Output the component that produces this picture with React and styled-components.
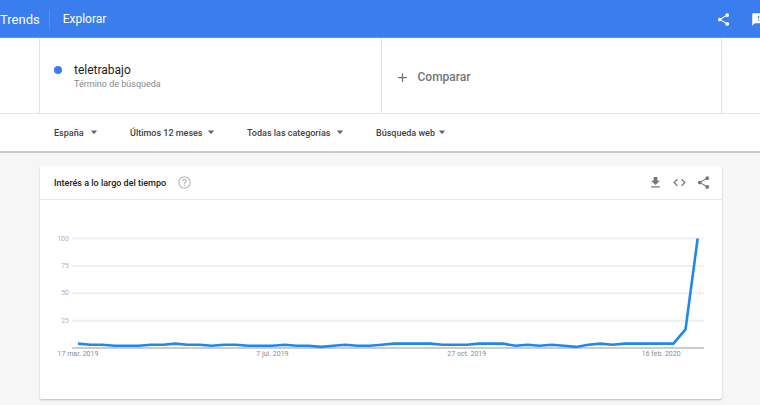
import React from 'react';
import styled, { createGlobalStyle } from 'styled-components';
import { MdShare, MdFeedback, MdFileDownload, MdCode, MdHelpOutline, MdAdd } from 'react-icons/md';

const filters = [
    { id: 'geo', label: 'Ubicación', width: 36, options: ['España', 'Chile'] },
    { id: 'time', label: 'Periodo', width: 77, options: ['Últimos 12 meses', 'Último día'] },
    { id: 'category', label: 'Categoría', width: 89, options: ['Todas las categorías', 'Empleo'] },
    { id: 'source', label: 'Tipo de búsqueda', width: 62, options: ['Búsqueda web', 'Noticias'] },
]

// weekly interest, 0 - 100
const interest = [
    4, 3, 3, 2, 2, 2, 3, 3, 4, 3, 3, 2, 3, 3, 2, 2, 2, 3, 2, 2, 1, 2, 3, 2, 2, 3,
    4, 4, 4, 4, 3, 3, 3, 4, 4, 4, 2, 3, 2, 3, 2, 1, 3, 4, 3, 4, 4, 4, 4, 4, 17, 100,
]

const weeks = [
    { index: 0, text: '17 mar. 2019' },
    { index: 16, text: '7 jul. 2019' },
    { index: 32, text: '27 oct. 2019' },
    { index: 48, text: '16 feb. 2020' },
]

const px = (i) => 38 + i * 12.15
const py = (v) => 148 - v * 1.095

const Filter = ({ id, label, width, options }) => {
    return (
        <FilterLabel htmlFor={id}>
            <Select id={id} aria-label={label} $width={width}>
                {options.map((o) => <option key={o}>{o}</option>)}
            </Select>
            <svg width="8" height="5" viewBox="0 0 8 5" aria-hidden="true">
                <path d="M0.8 0.5h6.4L4 4.3z" fill="#666" />
            </svg>
        </FilterLabel>
    )
}

const Chart = () => {
    return (
        <ChartSvg viewBox="0 0 682 199" role="img" aria-label="Interés a lo largo del tiempo">
            {[25, 50, 75, 100].map((v) => (
                <g key={v}>
                    <line x1="32" x2="664" y1={py(v)} y2={py(v)} stroke="#f0f0f0" strokeWidth="2" />
                    <AxisText x="29" y={Math.round(py(v)) + 2} textAnchor="end" $color="#b4b4b4">{v}</AxisText>
                </g>
            ))}
            <line x1="32" x2="664" y1="148" y2="148" stroke="#ccc" strokeWidth="2" />
            <polyline
                points={interest.map((v, i) => px(i) + ',' + py(v)).join(' ')}
                fill="none"
                stroke="#1e88f0"
                strokeWidth="2.6"
            />
            {weeks.map((w) => (
                <AxisText key={w.index} x={px(w.index)} y="156" textAnchor="middle" $color="#8c8c8c">{w.text}</AxisText>
            ))}
        </ChartSvg>
    )
}

export default function App() {
    return (
        <Page>
            <GlobalStyle />
            <Header>
                <Logo href="#">Trends</Logo>
                <Section href="#explore">Explorar</Section>
                <HeaderActions>
                    <IconButton aria-label="Compartir"><MdShare size={15} /></IconButton>
                    <IconButton aria-label="Enviar comentarios"><MdFeedback size={15} /></IconButton>
                </HeaderActions>
            </Header>
            <Terms>
                <TermRow>
                    <Term>
                        <Dot />
                        <div>
                            <TermName>teletrabajo</TermName>
                            <TermType>Término de búsqueda</TermType>
                        </div>
                    </Term>
                    <Compare><MdAdd size={15} />Comparar</Compare>
                </TermRow>
            </Terms>
            <Filters>
                {filters.map((f) => <Filter key={f.id} {...f} />)}
            </Filters>
            <Card>
                <CardHead>
                    <CardTitle>Interés a lo largo del tiempo</CardTitle>
                    <IconButton aria-label="Ayuda" $color="#bdbdbd"><MdHelpOutline size={15} /></IconButton>
                    <CardActions>
                        <IconButton aria-label="Descargar" $color="#757575"><MdFileDownload size={15} /></IconButton>
                        <IconButton aria-label="Insertar" $color="#757575"><MdCode size={15} /></IconButton>
                        <IconButton aria-label="Compartir" $color="#757575"><MdShare size={15} /></IconButton>
                    </CardActions>
                </CardHead>
                <Chart />
            </Card>
        </Page>
    )
}

const GlobalStyle = createGlobalStyle`
* {
    box-sizing: border-box;
}
body {
    margin: 0;
    background: #f6f6f6;
    font-family: Roboto, "Liberation Sans", sans-serif;
}
button, select {
    font-family: inherit;
}
`
const Page = styled.div`
overflow: hidden;
padding-bottom: 5px;
`
const Header = styled.header`
display: flex;
align-items: center;
height: 38px;
padding-top: 2px;
background: #3a7dee;
border-bottom: 1px solid #6f93cf;
`
const Logo = styled.a`
padding-right: 9px;
border-right: 1px solid #5990f1;
color: white;
font-size: 13px;
line-height: 19px;
text-decoration: none;
`
const Section = styled.a`
margin-left: 13px;
color: white;
font-size: 12px;
line-height: 19px;
text-decoration: none;
`
const HeaderActions = styled.div`
display: flex;
gap: 20px;
margin-left: auto;
margin-right: -6px;
`
const IconButton = styled.button`
display: flex;
padding: 0;
border: 0;
background: none;
color: ${(p) => p.$color || 'white'};
cursor: pointer;
`
const Terms = styled.section`
padding: 0 38px 0 39px;
background: white;
border-bottom: 1px solid #e4e4e4;
`
const TermRow = styled.div`
display: grid;
grid-template-columns: 1fr 1fr;
height: 75px;
border-left: 1px solid #e4e4e4;
border-right: 1px solid #e4e4e4;
`
const Term = styled.div`
display: flex;
gap: 12px;
padding: 24px 0 0 14px;
`
const Dot = styled.span`
width: 8px;
height: 8px;
margin-top: 4px;
border-radius: 50%;
background: #3a7dee;
`
const TermName = styled.div`
color: #212121;
font-size: 12px;
line-height: 16px;
`
const TermType = styled.div`
color: #888;
font-size: 9px;
line-height: 12px;
`
const Compare = styled.button`
display: flex;
align-items: center;
gap: 8px;
padding: 3px 0 0 13px;
border: 0;
border-left: 1px solid #e4e4e4;
background: none;
color: #757575;
font-size: 12px;
font-weight: 500;
cursor: pointer;
`
const Filters = styled.nav`
display: flex;
align-items: center;
gap: 32px;
height: 39px;
padding-left: 54px;
background: white;
border-bottom: 2px solid #c8c8c8;
`
const FilterLabel = styled.label`
display: flex;
align-items: center;
`
const Select = styled.select`
appearance: none;
width: ${(p) => p.$width}px;
padding: 0;
border: 0;
background: none;
color: #424242;
font-size: 9px;
font-weight: 500;
line-height: 12px;
cursor: pointer;
`
const Card = styled.section`
margin: 13px 38px 0 40px;
background: white;
border-radius: 2px;
box-shadow: 0 1px 2px rgba(0, 0, 0, 0.24);
`
const CardHead = styled.div`
display: flex;
align-items: center;
gap: 11px;
height: 34px;
padding: 0 11px 0 14px;
border-bottom: 1px solid #e8e8e8;
`
const CardTitle = styled.h2`
margin: 0;
color: #212121;
font-size: 9px;
font-weight: 500;
line-height: 12px;
`
const CardActions = styled.div`
display: flex;
align-items: center;
gap: 9px;
margin-left: auto;
`
const ChartSvg = styled.svg`
display: block;
width: 100%;
`
const AxisText = styled.text`
fill: ${(p) => p.$color};
font-size: 7px;
`
